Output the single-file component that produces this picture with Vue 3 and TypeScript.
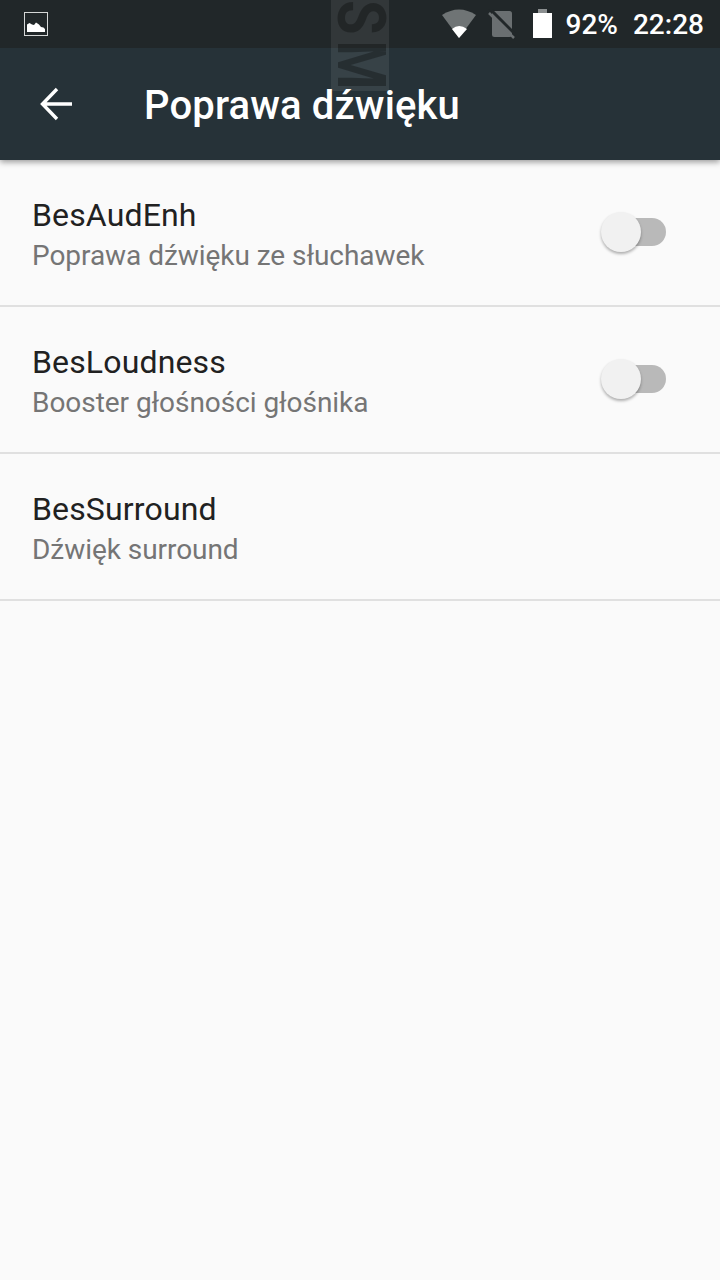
<script setup lang="ts">
interface Row { title: string; sub: string; toggle: boolean }
const rows: Row[] = [
  { title: 'BesAudEnh', sub: 'Poprawa dźwięku ze słuchawek', toggle: true },
  { title: 'BesLoudness', sub: 'Booster głośności głośnika', toggle: true },
  { title: 'BesSurround', sub: 'Dźwięk surround', toggle: false },
]
</script>

<template>
  <div class="page">
    <header class="head">
      <div class="status">
        <svg class="pic" width="24" height="24" viewBox="0 0 24 24">
          <rect x="0.5" y="0.5" width="23" height="23" fill="none" stroke="#d5d7d7" stroke-width="1"/>
          <path d="M3 20V12.5L5.5 11 8 12.5 10 13 12 10.5 15 12.5 17 15 19.5 15.5 21 17V20Z" fill="#fff"/>
        </svg>
        <div class="status-right">
          <svg class="wifi" width="36" height="30" viewBox="0 0 36 30">
            <path d="M1 6Q18 -5 35 6L18 29Z" fill="#6f7475"/>
            <path d="M11 20Q18 14 26 20L18 29Z" fill="#fff"/>
          </svg>
          <svg class="sim" width="28" height="30" viewBox="0 0 28 30">
            <rect x="4" y="2" width="20" height="26" rx="2.500" fill="#6a6f71"/>
            <path d="M3 1L28 26" stroke="#212729" stroke-width="3"/>
            <path d="M1 4L26 29" stroke="#6a6f71" stroke-width="2.500"/>
            <path d="M0 0H4V3Z" fill="#212729"/>
          </svg>
          <svg class="batt" width="19" height="29" viewBox="0 0 19 29">
            <path d="M5 0H14V4H5Z" fill="#8b8f90"/>
            <path d="M0 4H19V28.500A.5 .5 0 0 1 18.500 29H.5A.5 .5 0 0 1 0 28.500Z" fill="#fff"/>
          </svg>
          <span class="pct">92%</span>
          <span class="clock">22:28</span>
        </div>
      </div>
      <div class="toolbar">
        <svg class="back" width="34" height="34" viewBox="0 0 34 34">
          <path d="M32 17H4M17 2L2.500 17 17 32" fill="none" stroke="#fff" stroke-width="3.400"/>
        </svg>
        <h1 class="title">Poprawa dźwięku</h1>
      </div>
      <div class="mark"><span>SM</span></div>
    </header>
    <main class="list">
      <div v-for="r in rows" :key="r.title" class="row">
        <div class="texts">
          <div class="t">{{ r.title }}</div>
          <div class="s">{{ r.sub }}</div>
        </div>
        <div v-if="r.toggle" class="switch">
          <div class="track"></div>
          <div class="thumb"></div>
        </div>
      </div>
    </main>
  </div>
</template>

<style scoped>
.page {
  width: 720px;
  height: 1280px;
  background: #fafafa;
  font-family: Roboto, "Liberation Sans", sans-serif;
  overflow: hidden;
  position: relative;
}
.head {
  position: relative;
  z-index: 2;
  box-shadow: 0 2px 6px rgba(0, 0, 0, 0.4);
}
.status {
  height: 48px;
  box-sizing: border-box;
  background: #212729;
  display: flex;
  align-items: center;
  justify-content: space-between;
  padding: 0 16px 0 24px;
  color: #fff;
}
.pic { display: block; }
.status-right {
  display: flex;
  align-items: center;
  font-size: 28px;
  font-weight: 500;
  height: 48px;
}
.wifi, .sim, .batt {
  flex: none;
  align-self: flex-start;
  margin-top: 9px;
}
.wifi { margin-right: 11px; }
.sim { margin-right: 17px; }
.batt { margin-right: 14px; }
.pct { margin-right: 15px; }
.toolbar {
  height: 112px;
  background: #263238;
  display: flex;
  align-items: center;
  padding-left: 40px;
}
.back { display: block; flex: none; }
.title {
  margin: 4px 0 0 70px;
  font-size: 40px;
  font-weight: 500;
  letter-spacing: 0.15px;
  color: #fff;
  line-height: 1;
}
.mark {
  position: absolute;
  left: 331px;
  top: 0;
  width: 58px;
  height: 91px;
  background: rgba(255, 255, 255, 0.08);
}
.mark span {
  position: absolute;
  left: 0;
  top: 0;
  width: 58px;
  writing-mode: vertical-rl;
  font-family: Roboto, sans-serif;
  font-weight: 700;
  font-size: 66px;
  letter-spacing: 7px;
  line-height: 58px;
  color: rgba(0, 0, 0, 0.3);
  white-space: nowrap;
  transform: scaleY(0.85);
  transform-origin: top;
}
.row {
  height: 147px;
  box-sizing: border-box;
  border-bottom: 2px solid #e0e0e0;
  padding: 0 54px 0 32px;
  display: flex;
  align-items: center;
  justify-content: space-between;
}
.texts { margin-top: 4px; }
.t {
  font-size: 32px;
  line-height: 42px;
  letter-spacing: 0.15px;
  color: #212121;
  margin-bottom: 1px;
}
.s {
  font-size: 28px;
  line-height: 38px;
  letter-spacing: -0.05px;
  color: #757575;
}
.switch {
  position: relative;
  width: 65px;
  height: 40px;
  margin-top: -1px;
}
.track {
  position: absolute;
  right: 0;
  top: 6px;
  width: 60px;
  height: 28px;
  border-radius: 14px;
  background: #b9b9b9;
}
.thumb {
  position: absolute;
  left: 0;
  top: 0;
  width: 40px;
  height: 40px;
  border-radius: 50%;
  background: #f1f1f1;
  box-shadow: 0 2px 3px rgba(0, 0, 0, 0.3);
}
</style>
